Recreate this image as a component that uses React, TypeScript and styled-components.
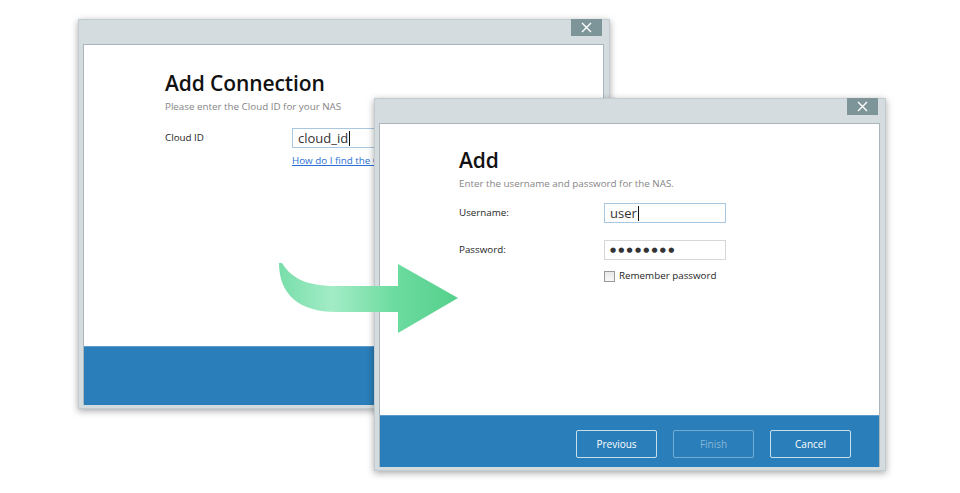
import React from "react";
import styled, { createGlobalStyle } from "styled-components";

const GlobalStyle = createGlobalStyle`
  html, body {
    margin: 0;
    padding: 0;
    background: #ffffff;
  }
  body {
    font-family: "Open Sans", "Noto Sans", "Liberation Sans", sans-serif;
    color: #222;
  }
`;

const Canvas = styled.div`
  position: relative;
  width: 960px;
  height: 493px;
  overflow: hidden;
  background: #fff;
`;

const Frame = styled.div<{ $left: number; $top: number; $width: number; $height: number }>`
  position: absolute;
  left: ${(p) => p.$left}px;
  top: ${(p) => p.$top}px;
  width: ${(p) => p.$width}px;
  height: ${(p) => p.$height}px;
  box-sizing: border-box;
  display: flex;
  flex-direction: column;
  background: #d5dcdf;
  border: 1px solid #c2cbcf;
  padding: 0 5px 3px 4px;
  box-shadow: 0 2px 7px rgba(0, 0, 0, 0.35);
`;

const TitleBar = styled.div<{ $h: number }>`
  height: ${(p) => p.$h}px;
  flex: none;
  display: flex;
  justify-content: flex-end;
  align-items: flex-start;
`;

const CloseButton = styled.div`
  width: 31px;
  height: 17px;
  margin-top: -1px;
  margin-right: 2px;
  background: #7d9498;
  display: flex;
  align-items: center;
  justify-content: center;
`;

const Content = styled.div`
  flex: 1;
  display: flex;
  flex-direction: column;
  border: 1px solid #a9b6bb;
  border-bottom: none;
  background: #fff;
  min-height: 0;
`;

const Body = styled.div<{ $padTop: number; $padLeft: number }>`
  flex: 1;
  padding: ${(p) => p.$padTop}px 0 0 ${(p) => p.$padLeft}px;
  display: flex;
  flex-direction: column;
`;

const Title = styled.h1`
  margin: 0;
  font-size: 21px;
  font-weight: 600;
  line-height: 26px;
  color: #111;
  letter-spacing: -0.1px;
`;

const Subtitle = styled.p`
  margin: 4px 0 0;
  font-size: 9.8px;
  line-height: 14px;
  color: #858585;
`;

const FormGrid = styled.div<{ $labelWidth: number; $mt: number }>`
  margin-top: ${(p) => p.$mt}px;
  display: grid;
  grid-template-columns: ${(p) => p.$labelWidth}px auto;
  row-gap: 17px;
  align-items: start;
`;

const Label = styled.span`
  font-size: 9.8px;
  line-height: 20px;
  color: #1e1e1e;
`;

const Field = styled.div<{ $focused?: boolean }>`
  width: 122px;
  height: 20px;
  box-sizing: border-box;
  border: 1px solid ${(p) => (p.$focused ? "#a8c7e2" : "#d4d8da")};
  background: #fff;
  display: flex;
  align-items: center;
  padding-left: 5px;
  font-size: 13px;
  color: #333;
`;

const Caret = styled.span`
  display: inline-block;
  width: 1px;
  height: 15px;
  background: #111;
  margin-left: 1px;
`;

const Dots = styled.span`
  font-size: 7px;
  letter-spacing: 2.2px;
  color: #333;
  font-family: "DejaVu Sans", sans-serif;
`;

const FieldStack = styled.div<{ $gap: number }>`
  display: flex;
  flex-direction: column;
  gap: ${(p) => p.$gap}px;
`;

const Link = styled.a`
  font-size: 9.8px;
  line-height: 13px;
  color: #2a6fd6;
  text-decoration: underline;
  white-space: nowrap;
`;

const CheckRow = styled.label`
  display: flex;
  align-items: center;
  gap: 4px;
  font-size: 9.8px;
  line-height: 12px;
  color: #1e1e1e;
`;

const CheckBox = styled.span`
  width: 9px;
  height: 9px;
  border: 1px solid #999;
  background: linear-gradient(#e9e9e9, #f7f7f7);
`;

const Footer = styled.div<{ $h: number }>`
  height: ${(p) => p.$h}px;
  flex: none;
  background: #2a7eb9;
  border-top: 1px solid #5b9ccc;
  display: flex;
  align-items: flex-start;
  justify-content: flex-end;
  gap: 16px;
  padding: 14px 28px 0 0;
  box-sizing: border-box;
`;

const FooterButton = styled.button<{ $disabled?: boolean }>`
  width: 81px;
  height: 28px;
  box-sizing: border-box;
  background: transparent;
  border: 1px solid ${(p) => (p.$disabled ? "rgba(255,255,255,0.35)" : "rgba(255,255,255,0.75)")};
  border-radius: 2px;
  color: ${(p) => (p.$disabled ? "rgba(255,255,255,0.45)" : "#fff")};
  font-family: inherit;
  font-size: 10px;
  padding: 0;
`;

const ArrowLayer = styled.svg`
  position: absolute;
  left: 270px;
  top: 255px;
  overflow: visible;
`;

const CloseIcon = () => (
  <svg width="11" height="11" viewBox="0 0 11 11">
    <path d="M1 1 L10 10 M10 1 L1 10" stroke="#fff" strokeWidth="1.4" />
  </svg>
);

export default function App() {
  return (
    <Canvas>
      <GlobalStyle />

      <Frame $left={78} $top={19} $width={532} $height={390}>
        <TitleBar $h={24}>
          <CloseButton>
            <CloseIcon />
          </CloseButton>
        </TitleBar>
        <Content>
          <Body $padTop={25} $padLeft={81}>
            <Title>Add Connection</Title>
            <Subtitle>Please enter the Cloud ID for your NAS</Subtitle>
            <FormGrid $labelWidth={127} $mt={14}>
              <Label>Cloud ID</Label>
              <FieldStack $gap={6}>
                <Field $focused>
                  cloud_id
                  <Caret />
                </Field>
                <Link>How do I find the Cloud ID?</Link>
              </FieldStack>
            </FormGrid>
          </Body>
          <Footer $h={59} />
        </Content>
      </Frame>

      <Frame $left={374} $top={98} $width={512} $height={373}>
        <TitleBar $h={24}>
          <CloseButton>
            <CloseIcon />
          </CloseButton>
        </TitleBar>
        <Content>
          <Body $padTop={23} $padLeft={79}>
            <Title>Add</Title>
            <Subtitle>Enter the username and password for the NAS.</Subtitle>
            <FormGrid $labelWidth={145} $mt={12}>
              <Label>Username:</Label>
              <Field $focused>
                user
                <Caret />
              </Field>
              <Label>Password:</Label>
              <FieldStack $gap={10}>
                <Field>
                  <Dots>●●●●●●●●</Dots>
                </Field>
                <CheckRow>
                  <CheckBox />
                  Remember password
                </CheckRow>
              </FieldStack>
            </FormGrid>
          </Body>
          <Footer $h={52}>
            <FooterButton>Previous</FooterButton>
            <FooterButton $disabled>Finish</FooterButton>
            <FooterButton>Cancel</FooterButton>
          </Footer>
        </Content>
      </Frame>

      <ArrowLayer width="200" height="90" viewBox="0 0 200 90">
        <defs>
          <linearGradient id="arrowFill" x1="9" y1="0" x2="188" y2="0" gradientUnits="userSpaceOnUse">
            <stop offset="0" stopColor="#78deaa" />
            <stop offset="0.3" stopColor="#a3ecc6" />
            <stop offset="0.65" stopColor="#6cdb9f" />
            <stop offset="1" stopColor="#55d08c" />
          </linearGradient>
        </defs>
        <path
          d="M9 8 C9 40 30 57 66 57 L128 57 L128 78 L188 43 L128 9 L128 31 L66 31 C40 31 22 25 12 8 Z"
          fill="url(#arrowFill)"
        />
      </ArrowLayer>
    </Canvas>
  );
}
